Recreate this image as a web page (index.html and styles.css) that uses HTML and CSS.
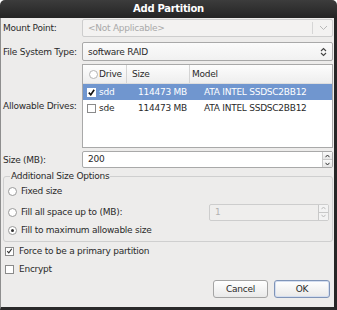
FILE: index.html
```html
<!DOCTYPE html>
<html>
<head>
<meta charset="utf-8">
<link rel="stylesheet" href="styles.css">
</head>
<body>
<div class="window">
  <div class="titlebar">Add Partition</div>
  <div class="content">
    <div class="row r-mount">
      <span class="lbl">Mount Point:</span>
      <div class="combo disabled">
        <span class="ctext">&lt;Not Applicable&gt;</span>
        <span class="csep"></span>
        <svg class="chev" width="9" height="6" viewBox="0 0 9 6"><path d="M1 1 L4.5 4.5 L8 1" fill="none" stroke="#b8b8b8" stroke-width="1"/></svg>
      </div>
    </div>
    <div class="row r-fs">
      <span class="lbl">File System Type:</span>
      <div class="combo">
        <span class="ctext">software RAID</span>
        <svg class="updown" width="7" height="10" viewBox="0 0 7 10"><path d="M1 4 L3.5 1.5 L6 4 M1 6 L3.5 8.5 L6 6" fill="none" stroke="#444" stroke-width="1.1"/></svg>
      </div>
    </div>
    <div class="row r-drives">
      <span class="lbl">Allowable Drives:</span>
      <div class="list">
        <div class="lhead">
          <span class="c0"><span class="hradio"></span></span>
          <span class="c1">Drive</span>
          <span class="c2">Size</span>
          <span class="c3">Model</span>
        </div>
        <div class="lrow sel">
          <span class="c0"><span class="lcb"><svg width="7" height="7" viewBox="0 0 7 7"><path d="M0.8 3.6 L2.8 5.8 L6.2 0.8" fill="none" stroke="#111" stroke-width="1.6"/></svg></span></span>
          <span class="c1">sdd</span>
          <span class="c2">114473 MB</span>
          <span class="c3">ATA INTEL SSDSC2BB12</span>
        </div>
        <div class="lrow">
          <span class="c0"><span class="lcb"></span></span>
          <span class="c1">sde</span>
          <span class="c2">114473 MB</span>
          <span class="c3">ATA INTEL SSDSC2BB12</span>
        </div>
      </div>
    </div>
    <div class="row r-size">
      <span class="lbl">Size (MB):</span>
      <div class="spin">
        <span class="stext">200</span>
        <div class="sbtns">
          <span class="sbtn"><svg width="5" height="4" viewBox="0 0 5 4"><path d="M0.5 3.2 L2.5 1 L4.5 3.2" fill="none" stroke="#333" stroke-width="1"/></svg></span>
          <span class="sbtn"><svg width="5" height="4" viewBox="0 0 5 4"><path d="M0.5 0.8 L2.5 3 L4.5 0.8" fill="none" stroke="#333" stroke-width="1"/></svg></span>
        </div>
      </div>
    </div>
    <fieldset class="frame">
      <legend>Additional Size Options</legend>
      <div class="opt"><span class="radio"></span>Fixed size</div>
      <div class="opt opt2"><span class="radio"></span>Fill all space up to (MB):
        <div class="spin small disabled">
          <span class="stext">1</span>
          <div class="sbtns">
            <span class="sbtn"><svg width="5" height="4" viewBox="0 0 5 4"><path d="M0.5 3.2 L2.5 1 L4.5 3.2" fill="none" stroke="#bbb" stroke-width="1"/></svg></span>
            <span class="sbtn"><svg width="5" height="4" viewBox="0 0 5 4"><path d="M0.5 0.8 L2.5 3 L4.5 0.8" fill="none" stroke="#bbb" stroke-width="1"/></svg></span>
          </div>
        </div>
      </div>
      <div class="opt"><span class="radio on"></span>Fill to maximum allowable size</div>
    </fieldset>
    <div class="check"><span class="cb"><svg width="8" height="8" viewBox="0 0 8 8"><path d="M1.4 4.2 L3.2 6.2 L6.6 1.4" fill="none" stroke="#333" stroke-width="1.3"/></svg></span>Force to be a primary partition</div>
    <div class="check"><span class="cb"></span>Encrypt</div>
    <div class="buttons">
      <button class="btn">Cancel</button>
      <button class="btn default">OK</button>
    </div>
  </div>
</div>
</body>
</html>
```

FILE: styles.css
```css
html, body {
  margin: 0;
  padding: 0;
  background: #ffffff;
}
.window {
  width: 337px;
  height: 310px;
  display: flex;
  flex-direction: column;
  font-family: "DejaVu Sans", sans-serif;
  font-size: 9px;
  letter-spacing: -0.25px;
  color: #2a2a2a;
}
.titlebar {
  height: 18px;
  flex: none;
  background: linear-gradient(#3c3c3c, #242424);
  border-radius: 5px 5px 0 0;
  color: #ffffff;
  font-weight: bold;
  font-size: 10px;
  letter-spacing: -0.3px;
  line-height: 18px;
  text-align: center;
}
.content {
  flex: 1;
  box-sizing: border-box;
  background: #edeceb;
  border-left: 1px solid #8e8e8e;
  border-right: 3px solid #262626;
  border-bottom: 3px solid #2a2a2a;
  padding: 1px 1px 0 2px;
  display: flex;
  flex-direction: column;
}
.row {
  display: flex;
  align-items: center;
}
.lbl {
  width: 79px;
  flex: none;
  white-space: nowrap;
}
.combo {
  width: 251px;
  box-sizing: border-box;
  display: flex;
  align-items: center;
  border: 1px solid #a9a9a9;
  border-radius: 2px;
  background: linear-gradient(#fbfbfb, #f1f1f1);
  padding-left: 5px;
}
.r-mount .combo { height: 18px; }
.r-fs { margin-top: 5px; }
.r-fs .combo { height: 19px; }
.combo.disabled {
  border-color: #cdcdcd;
  background: #f3f2f1;
  color: #a9a9a9;
}
.ctext { flex: 1; }
.csep {
  width: 1px;
  align-self: stretch;
  margin: 2px 0;
  background: #d6d6d6;
}
.chev { margin: 0 4px 0 6px; }
.updown { margin: 0 5px 0 6px; }

.r-drives { margin-top: 3px; }
.list {
  width: 251px;
  height: 84px;
  box-sizing: border-box;
  border: 1px solid #a9a9a9;
  background: #ffffff;
}
.lhead, .lrow {
  display: flex;
  align-items: center;
  white-space: nowrap;
}
.lhead {
  height: 18px;
  background: linear-gradient(#fdfdfd, #eeeeee);
  border-bottom: 1px solid #dedede;
}
.lrow { height: 16px; }
.lrow.sel {
  background: #7096cf;
  color: #ffffff;
}
.c0 {
  width: 16px;
  flex: none;
  display: flex;
}
.c1 { width: 27px; flex: none; }
.c2 { width: 63px; flex: none; box-sizing: border-box; }
.c3 { flex: 1; }
.lhead .c2, .lhead .c3 {
  border-left: 1px solid #d4d4d4;
  align-self: stretch;
  display: flex;
  align-items: center;
}
.lhead .c2 { padding-left: 5px; }
.lhead .c3 { padding-left: 2px; }
.lrow .c2 { padding-left: 12px; }
.lrow .c3 { padding-left: 15px; }
.hradio {
  width: 7px;
  height: 7px;
  border: 1px solid #b4b4b4;
  border-radius: 50%;
  margin-left: 6px;
  background: #fff;
}
.lcb {
  width: 7px;
  height: 7px;
  border: 1px solid #8a8a8a;
  background: #ffffff;
  margin-left: 4px;
  display: flex;
  align-items: center;
  justify-content: center;
}
.lrow.sel .lcb { border-color: #ffffff; }

.r-size { margin-top: 3px; }
.spin {
  width: 251px;
  height: 17px;
  box-sizing: border-box;
  border: 1px solid #a9a9a9;
  border-radius: 2px;
  background: #ffffff;
  display: flex;
  align-items: stretch;
}
.stext {
  flex: 1;
  padding-left: 5px;
  line-height: 15px;
}
.sbtns {
  width: 9px;
  display: flex;
  flex-direction: column;
  border-left: 1px solid #c8c8c8;
}
.sbtn {
  flex: 1;
  display: flex;
  align-items: center;
  justify-content: center;
  background: linear-gradient(#fafafa, #e6e6e6);
}
.sbtn + .sbtn { border-top: 1px solid #c8c8c8; }

.frame {
  margin: 3px 0 0 0;
  width: 330px;
  box-sizing: border-box;
  border: 1px solid #cfcfcf;
  border-radius: 3px;
  padding: 0 3px 2px 4px;
  min-width: 0;
}
.frame legend {
  padding: 0 1px;
  margin-left: 2px;
  line-height: 11px;
}
.opt {
  height: 18px;
  display: flex;
  align-items: center;
  white-space: nowrap;
}
.opt2 { margin-top: 3px; }
.radio {
  width: 7px;
  height: 7px;
  border: 1px solid #9a9a9a;
  border-radius: 50%;
  background: #ffffff;
  margin-right: 4px;
  position: relative;
  flex: none;
}
.radio.on::after {
  content: "";
  position: absolute;
  left: 2px;
  top: 2px;
  width: 3px;
  height: 3px;
  border-radius: 50%;
  background: #333333;
}
.spin.small {
  width: 120px;
  height: 17px;
  margin-left: auto;
}
.spin.disabled {
  border-color: #cdcdcd;
  background: #efeeed;
  color: #b2b2b2;
}
.spin.disabled .sbtn { background: #f3f3f3; }

.check {
  height: 18px;
  display: flex;
  align-items: center;
  white-space: nowrap;
}
.check:first-of-type { margin-top: 1px; }
.cb {
  width: 7px;
  height: 7px;
  border: 1px solid #8a8a8a;
  background: #ffffff;
  margin: 0 5px 0 2px;
  display: flex;
  align-items: center;
  justify-content: center;
  flex: none;
}
.buttons {
  margin-top: 2px;
  display: flex;
  justify-content: flex-end;
  gap: 6px;
  padding-right: 3px;
}
.btn {
  height: 18px;
  box-sizing: border-box;
  font-family: "DejaVu Sans", sans-serif;
  font-size: 9px;
  letter-spacing: -0.25px;
  color: #2a2a2a;
  border: 1px solid #a4a4a4;
  border-radius: 3px;
  background: linear-gradient(#ffffff, #e9e9e9);
  padding: 0;
  width: 55px;
}
.btn.default {
  width: 56px;
  border-color: #7f94b8;
  box-shadow: inset 0 0 0 1px #d4def0;
}
```
